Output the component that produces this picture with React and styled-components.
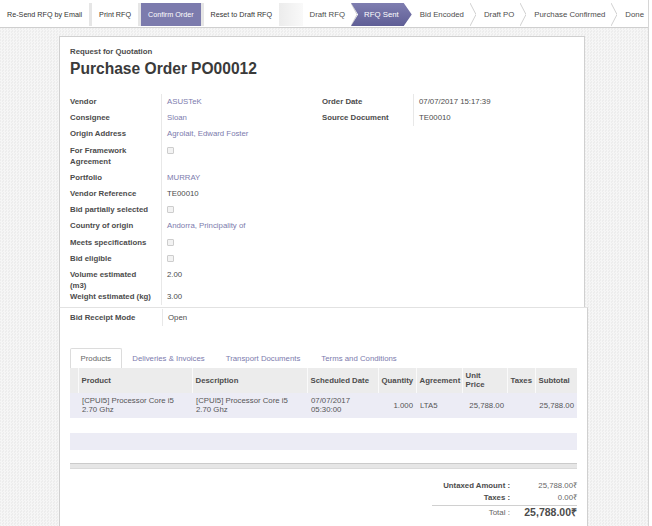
import React from 'react';
import styled, { createGlobalStyle } from 'styled-components';

const GlobalStyle = createGlobalStyle`
  html, body { margin: 0; padding: 0; }
  body {
    font-family: "Liberation Sans", Arial, sans-serif;
    color: #4c4c4c;
    background: #fff;
    width: 652px;
    height: 526px;
    overflow: hidden;
  }
  * { box-sizing: border-box; }
`;

const Page = styled.div`
  width: 649px;
  height: 526px;
  border-right: 1px solid #d6d6d6;
  background-color: #f2f2f2;
  background-image: repeating-conic-gradient(#f6f6f6 0 25%, #ededed 0 50%);
  background-size: 3px 3px;
  display: flex;
  flex-direction: column;
  overflow: hidden;
`;

const Header = styled.div`
  height: 28px;
  flex-shrink: 0;
  background: #fff;
  border-bottom: 1px solid #cfcfcf;
  padding-top: 3px;
  display: flex;
  align-items: flex-start;
`;

const Buttons = styled.div`
  display: flex;
  gap: 3px;
  height: 23px;
  background: #e6e6e6;
`;

const ActionButton = styled.div`
  height: 23px;
  padding: 0 7px;
  display: flex;
  align-items: center;
  font-size: 7.2px;
  white-space: nowrap;
  background: ${p => (p.$primary ? '#7c7bad' : '#fff')};
  color: ${p => (p.$primary ? '#fff' : '#333')};
`;

const Filler = styled.div`
  flex: 1;
  height: 23px;
  background: linear-gradient(to right, #ececec, #f9f9f9);
`;

const Steps = styled.div`
  display: flex;
  height: 23px;
  background: #fff;
`;

const Step = styled.div`
  display: flex;
  align-items: center;
  height: 100%;
  font-size: 7.8px;
  color: #4c4c4c;
  white-space: nowrap;
`;

const StepLabel = styled.span`
  padding: 0 ${p => (p.$last ? 4 : 6)}px 0 ${p => (p.$first ? 7 : 8)}px;
`;

const ActiveStep = styled.div`
  display: flex;
  align-items: center;
  height: 100%;
  margin-left: -6px;
  padding: 0 13px;
  font-size: 7.8px;
  color: #fff;
  white-space: nowrap;
  background: linear-gradient(to bottom, #7f7eb0, #5f5e96);
  clip-path: polygon(0 0, calc(100% - 8px) 0, 100% 50%, calc(100% - 8px) 100%, 0 100%, 7px 50%);
`;

const Chevron = () => (
  <svg width="6" height="23" viewBox="0 0 6 23">
    <polyline points="0,0 6,11.5 0,23" fill="none" stroke="#d2d2d2" strokeWidth="1" />
  </svg>
);

const Content = styled.div`
  padding: 8px 0 0 59px;
  flex: 1;
  overflow: hidden;
`;

const SheetTop = styled.div`
  width: 526px;
  background: #fff;
  border: 1px solid #d0d0d0;
  border-bottom: none;
  padding: 9px 7px 2px 10px;
`;

const SheetBottom = styled.div`
  width: 529px;
  min-height: 240px;
  background: #fff;
  border-left: 1px solid #d0d0d0;
  border-right: 1px solid #d0d0d0;
  border-top: 1px solid #e2e2e2;
  padding: 1px 10px 0 10px;
`;

const Subtitle = styled.div`
  font-size: 7.8px;
  font-weight: bold;
  line-height: 12px;
  color: #4c4c4c;
`;

const Title = styled.h1`
  margin: 2px 0 0;
  font-size: 15.6px;
  line-height: 18px;
  font-weight: bold;
  color: #3a3a3a;
  display: flex;
  gap: 4px;
`;

const FieldGrid = styled.div`
  display: grid;
  grid-template-columns: 252px 1fr;
  align-items: start;
  margin-top: ${p => p.$mt ?? 15}px;
`;

const Group = styled.div`
  display: flex;
  flex-direction: column;
`;

const Row = styled.div`
  display: grid;
  grid-template-columns: ${p => p.$labelWidth ?? 91}px 1fr;
`;

const Label = styled.div`
  font-weight: bold;
  font-size: 7.8px;
  line-height: 11px;
  color: #4c4c4c;
  padding: ${p => p.$pt}px 8px ${p => p.$pb}px 0;
`;

const Value = styled.div`
  border-left: 1px solid #e8e8e8;
  font-size: 7.8px;
  line-height: 11px;
  color: ${p => (p.$link ? '#7c7bad' : '#4c4c4c')};
  padding: ${p => p.$pt}px 0 ${p => p.$pb}px 5px;
`;

const Check = styled.span`
  display: inline-block;
  width: 7px;
  height: 7px;
  margin-top: 2px;
  vertical-align: top;
  border: 1px solid #cdcdcd;
  border-radius: 1px;
  background: #f3f3f3;
`;

function Field({ label, children, link, tightTop, tightBottom, labelWidth, pad = 2.6 }) {
  const pt = tightTop ? 0 : pad;
  const pb = tightBottom ? 0 : pad;
  return (
    <Row $labelWidth={labelWidth}>
      <Label $pt={pt} $pb={pb}>{label}</Label>
      <Value $pt={pt} $pb={pb} $link={link}>{children}</Value>
    </Row>
  );
}

const Tabs = styled.div`
  display: flex;
  height: 20px;
  margin-top: 22px;
`;

const Tab = styled.div`
  height: 20px;
  padding: 0 9.5px;
  display: flex;
  align-items: center;
  font-size: 7.8px;
  white-space: nowrap;
  border: 1px solid ${p => (p.$active ? '#dcdcdc' : 'transparent')};
  border-bottom: none;
  border-radius: 2px 2px 0 0;
  background: #fff;
  color: ${p => (p.$active ? '#666' : '#7c7bad')};
`;

const Table = styled.table`
  width: 507px;
  border-collapse: collapse;
  table-layout: fixed;
`;

const HeadCell = styled.th`
  height: 25px;
  background: #ececec;
  border-left: 1px solid #fafafa;
  font-size: 7.8px;
  line-height: 9px;
  font-weight: bold;
  color: #4c4c4c;
  text-align: left;
  vertical-align: middle;
  padding: 0 ${p => (p.$wrap ? 12 : 2)}px 0 3px;
  &:first-child { border-left: none; }
`;

const BodyRow = styled.tr`
  background: ${p => (p.$shaded ? '#ececf5' : '#fff')};
  height: ${p => p.$h}px;
`;

const Cell = styled.td`
  font-size: 7.8px;
  line-height: 9px;
  color: #555;
  vertical-align: middle;
  padding: 3px ${p => (p.$num ? 3 : 2)}px 3px ${p => (p.$num ? 2 : 4)}px;
  text-align: ${p => (p.$num ? 'right' : 'left')};
`;

const FootCell = styled.td`
  height: 5px;
  padding: 0;
  background: #e6e6e6;
  border-top: 1px solid #cbcbcb;
  border-bottom: 1px solid #dadada;
`;

const Totals = styled.div`
  width: 145px;
  margin: 11px 0 0 362px;
  display: grid;
  grid-template-columns: 80px 65px;
`;

const TotalLabel = styled.div`
  text-align: right;
  padding-right: 2px;
  font-size: ${p => (p.$grand ? 8 : 7.8)}px;
  font-weight: ${p => (p.$grand ? 'normal' : 'bold')};
  color: ${p => (p.$grand ? '#666' : '#4c4c4c')};
  line-height: ${p => (p.$grand ? 13 : 12)}px;
  border-top: ${p => (p.$grand ? '1px solid #d0d0d0' : 'none')};
  margin-top: ${p => (p.$grand ? 1 : 0)}px;
`;

const TotalValue = styled.div`
  text-align: right;
  font-size: ${p => (p.$grand ? 10.5 : 7.8)}px;
  font-weight: ${p => (p.$grand ? 'bold' : 'normal')};
  color: ${p => (p.$grand ? '#4c4c4c' : '#666')};
  line-height: ${p => (p.$grand ? 13 : 12)}px;
  border-top: ${p => (p.$grand ? '1px solid #d0d0d0' : 'none')};
  margin-top: ${p => (p.$grand ? 1 : 0)}px;
`;

const cols = [8, 114, 115, 71, 38, 46, 45, 28, 42];

export default function App() {
  return (
    <>
      <GlobalStyle />
      <Page>
        <Header>
          <Buttons>
            <ActionButton>Re-Send RFQ by Email</ActionButton>
            <ActionButton>Print RFQ</ActionButton>
            <ActionButton $primary>Confirm Order</ActionButton>
            <ActionButton>Reset to Draft RFQ</ActionButton>
          </Buttons>
          <Filler />
          <Steps>
            <Step><StepLabel $first>Draft RFQ</StepLabel><Chevron /></Step>
            <ActiveStep>RFQ Sent</ActiveStep>
            <Step><StepLabel>Bid Encoded</StepLabel><Chevron /></Step>
            <Step><StepLabel>Draft PO</StepLabel><Chevron /></Step>
            <Step><StepLabel>Purchase Confirmed</StepLabel><Chevron /></Step>
            <Step><StepLabel $last>Done</StepLabel></Step>
          </Steps>
        </Header>
        <Content>
          <SheetTop>
            <Subtitle>Request for Quotation</Subtitle>
            <Title><span>Purchase Order</span><span>PO00012</span></Title>
            <FieldGrid $mt={15.5}>
              <Group>
                <Field label="Vendor" link>ASUSTeK</Field>
                <Field label="Consignee" link>Sloan</Field>
                <Field label="Origin Address" link>Agrolait, Edward Foster</Field>
                <Field label="For Framework Agreement"><Check /></Field>
                <Field label="Portfolio" link>MURRAY</Field>
                <Field label="Vendor Reference">TE00010</Field>
                <Field label="Bid partially selected"><Check /></Field>
                <Field label="Country of origin" link>Andorra, Principality of</Field>
                <Field label="Meets specifications"><Check /></Field>
                <Field label="Bid eligible"><Check /></Field>
                <Field label="Volume estimated (m3)" tightBottom>2.00</Field>
                <Field label="Weight estimated (kg)" tightTop>3.00</Field>
              </Group>
              <Group>
                <Field label="Order Date">07/07/2017 15:17:39</Field>
                <Field label="Source Document">TE00010</Field>
              </Group>
            </FieldGrid>
          </SheetTop>
          <SheetBottom>
            <FieldGrid $mt={0}>
              <Group>
                <Field label="Bid Receipt Mode" labelWidth={92} pad={3.2}>Open</Field>
              </Group>
            </FieldGrid>
            <Tabs>
              <Tab $active>Products</Tab>
              <Tab>Deliveries &amp; Invoices</Tab>
              <Tab>Transport Documents</Tab>
              <Tab>Terms and Conditions</Tab>
            </Tabs>
            <Table>
              <colgroup>
                {cols.map((w, i) => <col key={i} style={{ width: w }} />)}
              </colgroup>
              <thead>
                <tr>
                  <HeadCell />
                  <HeadCell>Product</HeadCell>
                  <HeadCell>Description</HeadCell>
                  <HeadCell>Scheduled Date</HeadCell>
                  <HeadCell>Quantity</HeadCell>
                  <HeadCell>Agreement</HeadCell>
                  <HeadCell $wrap>Unit Price</HeadCell>
                  <HeadCell>Taxes</HeadCell>
                  <HeadCell>Subtotal</HeadCell>
                </tr>
              </thead>
              <tbody>
                <BodyRow $shaded $h={25}>
                  <Cell />
                  <Cell>[CPUI5] Processor Core i5 2.70 Ghz</Cell>
                  <Cell>[CPUI5] Processor Core i5 2.70 Ghz</Cell>
                  <Cell>07/07/2017 05:30:00</Cell>
                  <Cell $num>1.000</Cell>
                  <Cell>LTA5</Cell>
                  <Cell $num>25,788.00</Cell>
                  <Cell />
                  <Cell $num>25,788.00</Cell>
                </BodyRow>
                <BodyRow $h={15}><td colSpan={9} /></BodyRow>
                <BodyRow $shaded $h={17}><td colSpan={9} /></BodyRow>
                <BodyRow $h={14}><td colSpan={9} /></BodyRow>
              </tbody>
              <tfoot>
                <tr><FootCell colSpan={9} /></tr>
              </tfoot>
            </Table>
            <Totals>
              <TotalLabel>Untaxed Amount :</TotalLabel>
              <TotalValue>25,788.00₹</TotalValue>
              <TotalLabel>Taxes :</TotalLabel>
              <TotalValue>0.00₹</TotalValue>
              <TotalLabel $grand>Total :</TotalLabel>
              <TotalValue $grand>25,788.00₹</TotalValue>
            </Totals>
          </SheetBottom>
        </Content>
      </Page>
    </>
  );
}
